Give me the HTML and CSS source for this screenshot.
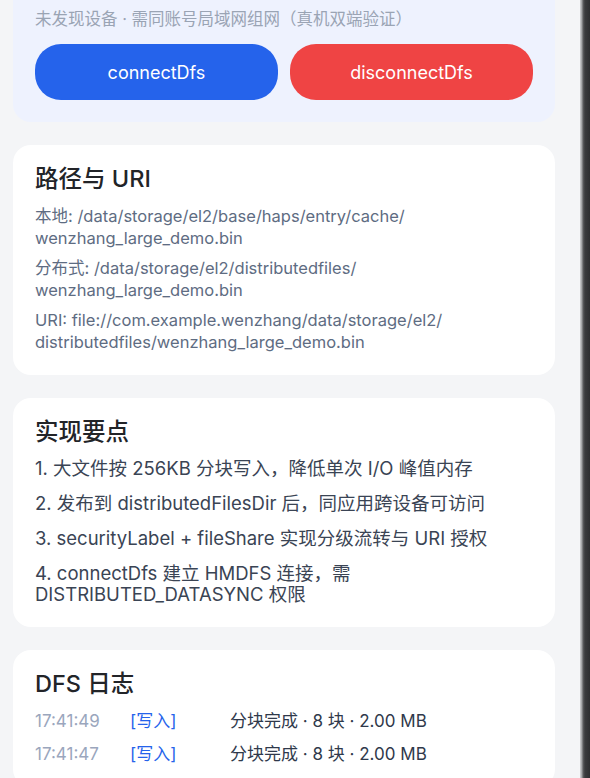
FILE: index.html
```html
<!DOCTYPE html>
<html lang="zh">
<head>
<meta charset="utf-8">
<title>DFS</title>
<link rel="stylesheet" href="styles.css">
</head>
<body>
<div class="screen">
  <main class="page">
    <section class="card status">
      <p class="hint">未发现设备 · 需同账号局域网组网（真机双端验证）</p>
      <div class="actions">
        <button class="btn btn-blue">connectDfs</button>
        <button class="btn btn-red">disconnectDfs</button>
      </div>
    </section>

    <section class="card">
      <h2 class="title">路径与 URI</h2>
      <div class="paths">
        <p>本地: /data/storage/el2/base/haps/entry/cache/<br>wenzhang_large_demo.bin</p>
        <p>分布式: /data/storage/el2/distributedfiles/<br>wenzhang_large_demo.bin</p>
        <p>URI: file://com.example.wenzhang/data/storage/el2/<br>distributedfiles/wenzhang_large_demo.bin</p>
      </div>
    </section>

    <section class="card">
      <h2 class="title">实现要点</h2>
      <ol class="points">
        <li>1. 大文件按 256KB 分块写入，降低单次 I/O 峰值内存</li>
        <li>2. 发布到 distributedFilesDir 后，同应用跨设备可访问</li>
        <li>3. securityLabel + fileShare 实现分级流转与 URI 授权</li>
        <li>4. connectDfs 建立 HMDFS 连接，需 DISTRIBUTED_DATASYNC 权限</li>
      </ol>
    </section>

    <section class="card">
      <h2 class="title">DFS 日志</h2>
      <div class="log">
        <div class="log-row"><span class="time">17:41:49</span><span class="tag">[写入]</span><span class="msg">分块完成 · 8 块 · 2.00 MB</span></div>
        <div class="log-row"><span class="time">17:41:47</span><span class="tag">[写入]</span><span class="msg">分块完成 · 8 块 · 2.00 MB</span></div>
      </div>
    </section>
  </main>
  <div class="frame-edge"></div>
</div>
</body>
</html>
```

FILE: styles.css
```css
* { box-sizing: border-box; }
html, body {
  margin: 0;
  padding: 0;
  height: 100%;
  overflow: hidden;
}
body {
  font-family: Inter, "Noto Sans CJK SC", sans-serif;
  background: #f4f5f7;
  color: #1f2329;
}
.screen {
  display: flex;
  height: 778px;
}
.page {
  width: 580px;
  flex: none;
  padding: 0 25px 0 13px;
  display: flex;
  flex-direction: column;
  gap: 23px;
}
.frame-edge {
  flex: 1;
  background: linear-gradient(90deg, #d2d3d5 0, #9a9b9d 2px, #5d5e60 3px, #3a3b3d 5px, #2e2f31 10px);
}
.card {
  background: #ffffff;
  border-radius: 18px;
  padding: 20px 22px 22px;
}
.card.status {
  background: #eef2fe;
  border-radius: 0 0 18px 18px;
  padding: 8px 22px 22px;
}
.hint {
  margin: 0;
  font-size: 16.5px;
  line-height: 22px;
  color: #9aa4b4;
}
.actions {
  margin-top: 14px;
  display: flex;
  gap: 12px;
}
.btn {
  flex: 1;
  height: 56px;
  border: none;
  border-radius: 26px;
  color: #ffffff;
  font-family: Inter, "Noto Sans CJK SC", sans-serif;
  font-size: 18px;
}
.btn-blue { background: #2563eb; }
.btn-red { background: #ef4444; }
.title {
  margin: 0;
  font-size: 23.5px;
  line-height: 28px;
  font-weight: 500;
  color: #222428;
}
.paths {
  margin-top: 12px;
  display: flex;
  flex-direction: column;
  gap: 8px;
}
.paths p {
  margin: 0;
  font-size: 16.5px;
  line-height: 22px;
  color: #5e6c82;
}
.points {
  list-style: none;
  margin: 12px 0 0;
  padding: 0;
  display: flex;
  flex-direction: column;
  gap: 14px;
}
.points li {
  font-size: 18.5px;
  line-height: 21px;
  color: #3a4454;
}
.log {
  margin-top: 12px;
  display: flex;
  flex-direction: column;
  gap: 11px;
}
.log-row {
  display: flex;
  font-size: 17px;
  line-height: 22px;
}
.time { width: 95px; color: #9aa6bd; }
.tag { width: 100px; color: #2563eb; }
.msg { color: #2f394b; }
```
